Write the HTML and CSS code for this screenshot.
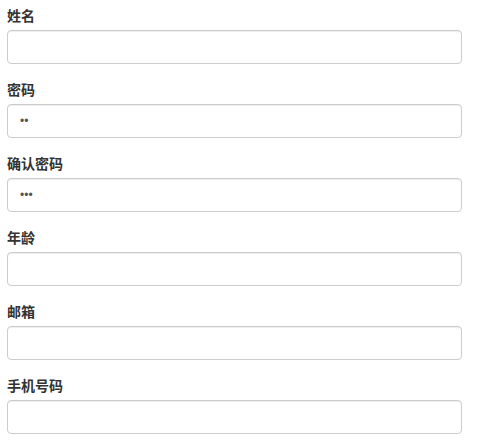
FILE: index.html
```html
<!DOCTYPE html>
<html>
<head>
<meta charset="utf-8">
<link rel="stylesheet" href="styles.css">
</head>
<body>
<form class="form">
  <div class="form-group">
    <label class="label">姓名</label>
    <input class="control" type="text">
  </div>
  <div class="form-group">
    <label class="label">密码</label>
    <input class="control" type="password" value="12">
  </div>
  <div class="form-group">
    <label class="label">确认密码</label>
    <input class="control" type="password" value="123">
  </div>
  <div class="form-group">
    <label class="label">年龄</label>
    <input class="control" type="text">
  </div>
  <div class="form-group">
    <label class="label">邮箱</label>
    <input class="control" type="text">
  </div>
  <div class="form-group">
    <label class="label">手机号码</label>
    <input class="control" type="text">
  </div>
</form>
</body>
</html>
```
FILE: styles.css
```css
html, body {
  margin: 0;
  padding: 0;
  background: #fff;
}
body {
  font-family: "Liberation Sans", "Noto Sans CJK SC", sans-serif;
  font-size: 14px;
  line-height: 20px;
  color: #333;
}
.form {
  width: 455px;
  padding: 5px 0 0 7px;
  display: flex;
  flex-direction: column;
  gap: 15px;
}
.form-group {
  display: flex;
  flex-direction: column;
}
.label {
  font-family: "Noto Sans CJK SC", sans-serif;
  font-weight: bold;
  font-size: 14px;
  line-height: 20px;
  margin-bottom: 5px;
  color: #333;
}
.control {
  box-sizing: border-box;
  height: 34px;
  width: 100%;
  margin: 0;
  padding: 6px 12px;
  font-family: "Liberation Sans", sans-serif;
  font-size: 12px;
  color: #555;
  background: #fff;
  border: 1px solid #ccc;
  border-radius: 4px;
  box-shadow: inset 0 1px 1px rgba(0,0,0,.075);
  outline: none;
}
```
